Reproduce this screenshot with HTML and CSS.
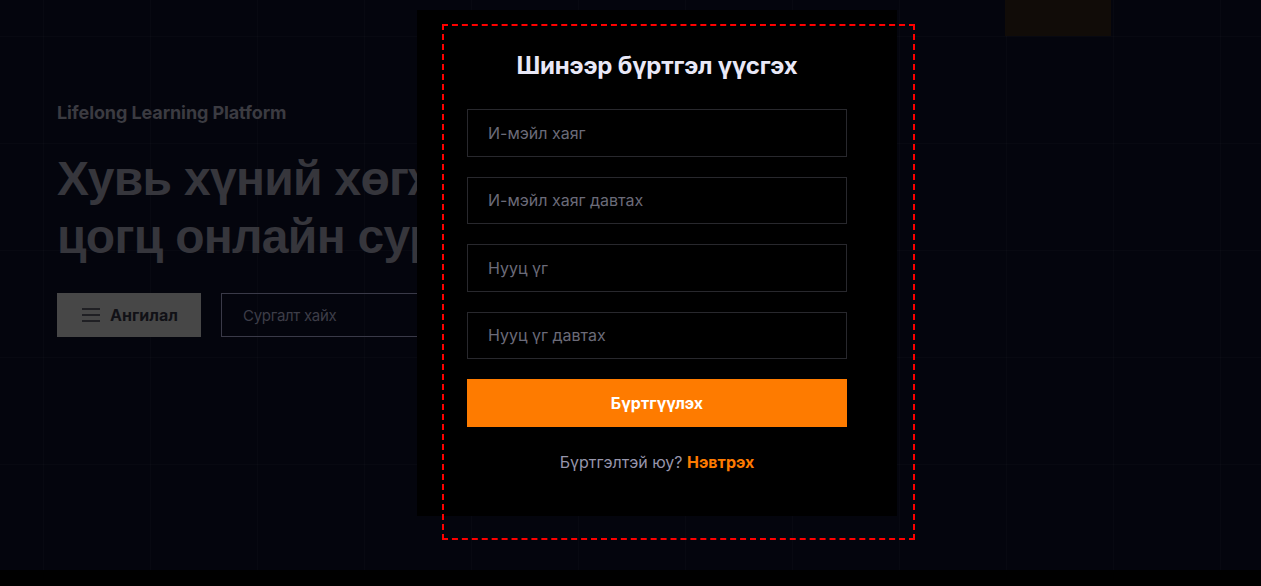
FILE: index.html
```html
<!DOCTYPE html>
<html lang="mn">
<head>
<meta charset="utf-8">
<title>Бүртгүүлэх</title>
<link rel="stylesheet" href="styles.css">
</head>
<body>
<div class="page">
  <div class="grid-cell-accent"></div>
  <section class="hero">
    <p class="eyebrow">Lifelong Learning Platform</p>
    <h1 class="hero-title">Хувь хүний хөгжлийн<br>цогц онлайн сургалт</h1>
    <div class="hero-actions">
      <button class="cat-btn" type="button">
        <svg class="cat-icon" width="18" height="14" viewBox="0 0 18 14" aria-hidden="true">
          <path d="M0 1h18M0 7h18M0 13h18" stroke="currentColor" stroke-width="1.6" fill="none"/>
        </svg>
        <span>Ангилал</span>
      </button>
      <div class="search-box">Сургалт хайх</div>
    </div>
  </section>

  <div class="modal">
    <h2 class="modal-title">Шинээр бүртгэл үүсгэх</h2>
    <form class="modal-form">
      <input class="field" type="email" placeholder="И-мэйл хаяг">
      <input class="field" type="email" placeholder="И-мэйл хаяг давтах">
      <input class="field" type="password" placeholder="Нууц үг">
      <input class="field" type="password" placeholder="Нууц үг давтах">
      <button class="submit" type="button">Бүртгүүлэх</button>
    </form>
    <p class="modal-foot">Бүртгэлтэй юу? <a class="login-link" href="#">Нэвтрэх</a></p>
  </div>

  <div class="focus-outline"></div>
</div>
</body>
</html>
```

FILE: styles.css
```css
* { box-sizing: border-box; }

html, body {
  margin: 0;
  padding: 0;
  background: #000;
}

body {
  font-family: Inter, "Noto Sans", "DejaVu Sans", sans-serif;
  overflow: hidden;
  height: 586px;
}

.page {
  position: relative;
  height: 570px;
  background-color: #04050d;
  background-image:
    linear-gradient(to right, rgba(255,255,255,0.016) 1px, transparent 1px),
    linear-gradient(to bottom, rgba(255,255,255,0.016) 1px, transparent 1px);
  background-size: 107px 107px;
  background-position: 43px 36px;
  overflow: hidden;
}

.grid-cell-accent {
  position: absolute;
  left: 1005px;
  top: 0;
  width: 106px;
  height: 36px;
  background: #110c08;
}

.hero {
  padding: 101px 0 0 57px;
}

.eyebrow {
  margin: 0;
  font-size: 18px;
  line-height: 24px;
  font-weight: 700;
  color: #3b3b41;
  letter-spacing: -0.1px;
}

.hero-title {
  margin: 25px 0 0;
  font-family: "Liberation Sans", Arial, sans-serif;
  font-size: 48px;
  line-height: 58px;
  font-weight: 700;
  color: #36363c;
  letter-spacing: -0.7px;
  white-space: nowrap;
}

.hero-actions {
  display: flex;
  gap: 20px;
  margin-top: 27px;
}

.cat-btn {
  display: flex;
  align-items: center;
  gap: 10px;
  width: 144px;
  height: 44px;
  padding: 0 0 0 25px;
  border: 0;
  background: #474747;
  color: #111116;
  font-family: Inter, sans-serif;
  font-size: 16px;
  font-weight: 700;
}

.cat-icon {
  color: #15151a;
}

.search-box {
  width: 400px;
  height: 44px;
  border: 1px solid #3a3a48;
  padding-left: 21px;
  display: flex;
  align-items: center;
  font-size: 15px;
  color: #3d3d48;
  letter-spacing: -0.3px;
}

.modal {
  position: absolute;
  left: 417px;
  top: 10px;
  width: 480px;
  height: 506px;
  background: #000;
  padding: 40px 50px 0;
  display: flex;
  flex-direction: column;
  align-items: center;
}

.modal-title {
  margin: 0;
  font-size: 24px;
  line-height: 32px;
  font-weight: 700;
  color: #e9e8f7;
  letter-spacing: -0.2px;
}

.modal-form {
  width: 380px;
  display: flex;
  flex-direction: column;
  gap: 20px;
  margin-top: 27px;
}

.field {
  width: 100%;
  height: 47.5px;
  background: #000;
  border: 1px solid #28282d;
  border-radius: 0;
  padding: 0 20px;
  font-family: Inter, sans-serif;
  font-size: 16px;
  color: #d0d0d8;
  outline: none;
}

.field::placeholder {
  color: #6b6b79;
}

.submit {
  height: 47.5px;
  border: 0;
  background: #fe7b00;
  color: #fff;
  font-family: Inter, sans-serif;
  font-size: 16px;
  font-weight: 700;
}

.modal-foot {
  margin: 24px 0 0;
  font-size: 16px;
  line-height: 22px;
  color: #9695ab;
}

.login-link {
  color: #fe7b00;
  font-weight: 700;
  text-decoration: none;
}

.focus-outline {
  position: absolute;
  left: 442px;
  top: 24px;
  width: 473px;
  height: 516px;
  border: 2px dashed #ff0000;
  pointer-events: none;
}
```
